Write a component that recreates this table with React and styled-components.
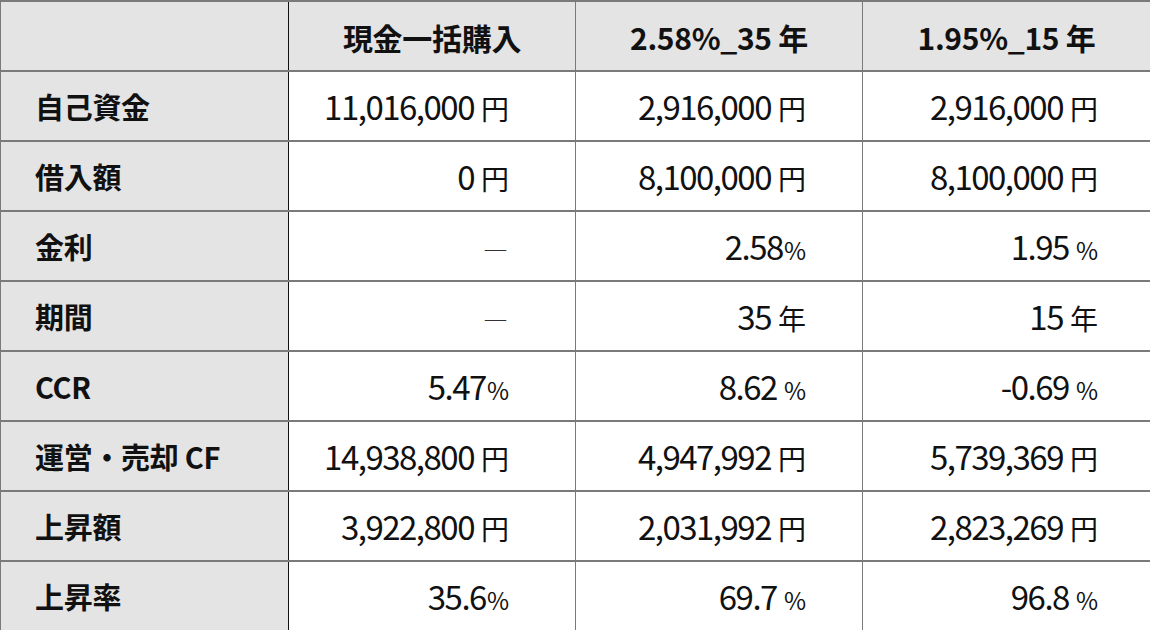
import styled, { createGlobalStyle } from 'styled-components';

const GlobalStyle = createGlobalStyle`
  html, body {
    margin: 0;
    padding: 0;
    background: #ffffff;
  }
  body {
    font-family: "Noto Sans CJK JP", "Noto Sans", sans-serif;
    color: #111111;
  }
`;

const columns = ['現金一括購入', '2.58%_35 年', '1.95%_15 年'];

// each value: [number, unit, spaced]
const rows = [
  { label: '自己資金', values: [['11,016,000', '円', true], ['2,916,000', '円', true], ['2,916,000', '円', true]] },
  { label: '借入額', values: [['0', '円', true], ['8,100,000', '円', true], ['8,100,000', '円', true]] },
  { label: '金利', values: [['―', '', false], ['2.58', '%', false], ['1.95', '%', true]] },
  { label: '期間', values: [['―', '', false], ['35', '年', true], ['15', '年', true]] },
  { label: 'CCR', values: [['5.47', '%', false], ['8.62', '%', true], ['-0.69', '%', true]] },
  { label: '運営・売却 CF', values: [['14,938,800', '円', true], ['4,947,992', '円', true], ['5,739,369', '円', true]] },
  { label: '上昇額', values: [['3,922,800', '円', true], ['2,031,992', '円', true], ['2,823,269', '円', true]] },
  { label: '上昇率', values: [['35.6', '%', false], ['69.7', '%', true], ['96.8', '%', true]] },
];

const rightPad = [66, 56, 52];

const App = () => {
  return (
    <>
      <GlobalStyle />
      <Table>
        <colgroup>
          <col style={{ width: 288 }} />
          <col style={{ width: 287 }} />
          <col style={{ width: 287 }} />
          <col style={{ width: 288 }} />
        </colgroup>
        <thead>
          <tr>
            <HeadCell $first />
            {columns.map((c) => (
              <HeadCell key={c}>{c}</HeadCell>
            ))}
          </tr>
        </thead>
        <tbody>
          {rows.map((row) => (
            <tr key={row.label}>
              <LabelCell>{row.label}</LabelCell>
              {row.values.map(([num, unit, spaced], i) => (
                <ValueCell key={i} $pad={rightPad[i]}>
                  {num === '―' ? (
                    <Dash>―</Dash>
                  ) : (
                    <>
                      <Num>{num}</Num>
                      {unit && <Unit $spaced={spaced} $small={unit === '%'}>{unit}</Unit>}
                    </>
                  )}
                </ValueCell>
              ))}
            </tr>
          ))}
        </tbody>
      </Table>
    </>
  );
};

const Table = styled.table`
  width: 1150px;
  height: 630px;
  border-collapse: collapse;
  table-layout: fixed;

  tr {
    height: 70px;
  }
`;

const Cell = styled.td`
  border-top: 2px solid #7a7a7a;
  border-bottom: 2px solid #7a7a7a;
  border-left: 1px solid #7a7a7a;
  border-right: 1px solid #7a7a7a;
  padding: 0;
  vertical-align: middle;
  white-space: nowrap;
`;

const HeadCell = styled(Cell).attrs({ as: 'th' })`
  background: #e4e4e4;
  font-size: 30px;
  font-weight: 700;
  text-align: center;
  letter-spacing: -0.3px;
  padding-top: 2px;
  border-right: ${(p) => (p.$first ? '1px solid #111111' : '1px solid #7a7a7a')};
`;

const LabelCell = styled(Cell)`
  background: #e4e4e4;
  font-size: 29px;
  font-weight: 700;
  padding-left: 34px;
  letter-spacing: -0.3px;
  border-right: 1px solid #111111;
`;

const ValueCell = styled(Cell)`
  text-align: right;
  padding-right: ${(p) => p.$pad}px;
  font-size: 33px;
  line-height: 1;
`;

const Num = styled.span`
  letter-spacing: -1.5px;
  font-weight: 400;
`;

const Unit = styled.span`
  font-size: ${(p) => (p.$small ? '24px' : '28px')};
  margin-left: ${(p) => (p.$spaced ? '7px' : '1px')};
  font-weight: 400;
`;

const Dash = styled.span`
  font-size: 25px;
  color: #333333;
  margin-right: 1px;
`;

export default App;
